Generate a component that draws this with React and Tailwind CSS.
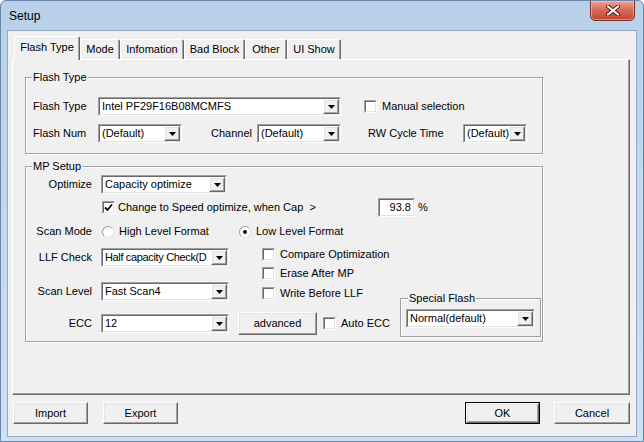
import React from "react";

const Sunken = ({ className = "", innerClass = "", children }) => (
  <div className={`border border-t-[#a0a0a0] border-l-[#a0a0a0] border-b-white border-r-white ${className}`}>
    <div className={`w-full h-full border border-t-[#696969] border-l-[#696969] border-b-[#e3e3e3] border-r-[#e3e3e3] bg-white flex items-center ${innerClass}`}>
      {children}
    </div>
  </div>
);

const Raised = ({ className = "", innerClass = "", children }) => (
  <div className={`border border-t-white border-l-white border-b-[#696969] border-r-[#696969] ${className}`}>
    <div className={`w-full h-full border border-t-[#e3e3e3] border-l-[#e3e3e3] border-b-[#a0a0a0] border-r-[#a0a0a0] bg-[#f0f0f0] flex items-center justify-center ${innerClass}`}>
      {children}
    </div>
  </div>
);

const Arrow = () => (
  <Raised className="w-[16px] h-full shrink-0">
    <svg width="7" height="4" viewBox="0 0 7 4">
      <polygon points="0,0 7,0 3.5,4" fill="#000" />
    </svg>
  </Raised>
);

const Select = ({ className, text, textClass = "" }) => (
  <Sunken className={`h-[19px] shrink-0 ${className}`}>
    <span className={`flex-1 pl-[2px] whitespace-nowrap overflow-hidden ${textClass}`}>{text}</span>
    <Arrow />
  </Sunken>
);

const Check = ({ checked, className = "" }) => (
  <Sunken className={`w-[13px] h-[13px] shrink-0 ${className}`} innerClass="justify-center">
    {checked && (
      <svg width="9" height="9" viewBox="0 0 9 9">
        <path d="M1 4.5 L3.5 7 L8 1.5" stroke="#000" strokeWidth="1.8" fill="none" />
      </svg>
    )}
  </Sunken>
);

const Radio = ({ checked, className = "" }) => (
  <div className={`w-[12px] h-[12px] rounded-full border border-t-[#a0a0a0] border-l-[#a0a0a0] border-b-[#e3e3e3] border-r-[#e3e3e3] bg-white flex items-center justify-center shrink-0 ${className}`}>
    {checked && <div className="w-[4px] h-[4px] rounded-full bg-black" />}
  </div>
);

const Group = ({ label, labelClass = "left-[6px]", className = "", children }) => (
  <div className={`relative border border-[#a0a0a0] shadow-[inset_1px_1px_0_#fff,1px_1px_0_#fff] ${className}`}>
    <span className={`absolute -top-[7px] px-[1px] bg-[#f0f0f0] leading-[13px] ${labelClass}`}>{label}</span>
    {children}
  </div>
);

const Button = ({ className = "", label, def }) =>
  def ? (
    <div className={`border border-black ${className}`}>
      <Raised className="w-full h-full">{label}</Raised>
    </div>
  ) : (
    <Raised className={className}>{label}</Raised>
  );

const Tab = ({ label, className, selected }) => (
  <div
    className={`flex items-center justify-center border-l border-t border-r border-l-white border-t-white border-r-[#696969] rounded-t-[2px] shadow-[inset_-1px_0_0_#a0a0a0] bg-[#f0f0f0] ${
      selected ? "h-[24px] -mb-px relative z-10 pb-[3px]" : "h-[20px]"
    } ${className}`}
  >
    {label}
  </div>
);

export default function App() {
  return (
    <div className="w-[644px] h-[442px] flex flex-col overflow-hidden rounded-t-[6px] border border-[#6a87ab] bg-gradient-to-b from-[#b8d0ea] via-[#c3d8ee] to-[#cfe0f2] font-['Liberation_Sans',Arial,sans-serif] text-[11px] leading-[13px] text-black">
      {/* title bar */}
      <div className="h-[29px] flex items-start shrink-0">
        <span className="ml-[8px] mt-[8px] text-[12px] leading-[14px] text-black">Setup</span>
        <div className="ml-auto mr-[8px] -mt-px w-[45px] h-[21px] rounded-b-[5px] border border-[#7d2f22] bg-gradient-to-b from-[#e8a597] via-[#d36753] to-[#c24530] shadow-[inset_0_0_0_1px_rgba(255,210,200,0.5)] flex items-center justify-center">
          <svg width="14" height="11" viewBox="0 0 14 11">
            <path d="M2 1.5 L12 9.5 M12 1.5 L2 9.5" stroke="#4a1a12" strokeWidth="4" strokeLinecap="round" />
            <path d="M2 1.5 L12 9.5 M12 1.5 L2 9.5" stroke="#fff" strokeWidth="2.2" strokeLinecap="round" />
          </svg>
        </div>
      </div>

      {/* client */}
      <div className="ml-[6px] w-[630px] h-[407px] border border-[#93a9c4] bg-[#f0f0f0] flex flex-col shrink-0">
        {/* tabs */}
        <div className="mt-[5px] h-[23px] flex items-end pl-[6px]">
          <Tab label="Flash Type" className="w-[66px]" selected />
          <Tab label="Mode" className="w-[40px]" />
          <Tab label="Infomation" className="w-[64px]" />
          <Tab label="Bad Block" className="w-[61px]" />
          <Tab label="Other" className="w-[42px]" />
          <Tab label="UI Show" className="w-[54px]" />
        </div>

        {/* panel */}
        <div className="ml-[4px] w-[618px] h-[336px] border border-l-white border-t-white border-r-[#696969] border-b-[#696969] shadow-[inset_-1px_-1px_0_#a0a0a0] flex flex-col">
          {/* Flash Type group */}
          <Group label="Flash Type" className="mt-[17px] ml-[12px] w-[518px] h-[77px]">
            <div className="mt-[19px] pl-[7px] h-[19px] flex items-center">
              <span className="w-[65px]">Flash Type</span>
              <Select className="w-[243px]" text="Intel PF29F16B08MCMFS" />
              <Check className="ml-[23px]" />
              <span className="ml-[5px]">Manual selection</span>
            </div>
            <div className="mt-[8px] pl-[7px] h-[19px] flex items-center">
              <span className="w-[65px]">Flash Num</span>
              <Select className="w-[84px]" text="(Default)" />
              <span className="ml-[29px] w-[46px]">Channel</span>
              <Select className="w-[84px]" text="(Default)" />
              <span className="ml-[27px] w-[95px]">RW Cycle Time</span>
              <Select className="w-[64px]" text="(Default)" />
            </div>
          </Group>

          {/* MP Setup group */}
          <Group label="MP Setup" className="mt-[12px] ml-[12px] w-[518px] h-[176px]">
            <div className="mt-[8px] h-[19px] flex items-center">
              <span className="w-[66px] text-right">Optimize</span>
              <Select className="ml-[9px] w-[126px]" text="Capacity optimize" />
            </div>
            <div className="mt-[4px] h-[19px] flex items-center pl-[76px]">
              <Check checked />
              <span className="ml-[3px] w-[260px]">Change to Speed optimize, when Cap &nbsp;&gt;</span>
              <Sunken className="w-[37px] h-[19px]" innerClass="justify-end">
                <span className="pr-[2px]">93.8</span>
              </Sunken>
              <span className="ml-[3px]">%</span>
            </div>
            <div className="mt-[5px] h-[19px] flex items-center">
              <span className="w-[66px] text-right">Scan Mode</span>
              <Radio className="ml-[10px]" />
              <span className="ml-[5px] w-[120px]">High Level Format</span>
              <Radio checked />
              <span className="ml-[5px]">Low Level Format</span>
            </div>

            <div className="mt-[7px] flex items-start">
              <div className="w-[374px] flex flex-col">
                {/* Sub A */}
                <div className="flex items-start h-[53px]">
                  <div className="flex flex-col w-[203px]">
                    <div className="h-[19px] flex items-center">
                      <span className="w-[66px] text-right">LLF Check</span>
                      <Select className="ml-[9px] w-[128px]" textClass="tracking-[-0.35px]" text="Half capacity Check(D" />
                    </div>
                    <div className="mt-[15px] h-[19px] flex items-center">
                      <span className="w-[66px] text-right">Scan Level</span>
                      <Select className="ml-[9px] w-[128px]" text="Fast Scan4" />
                    </div>
                  </div>
                  <div className="ml-[33px] flex flex-col">
                    <div className="h-[13px] flex items-center">
                      <Check />
                      <span className="ml-[5px]">Compare Optimization</span>
                    </div>
                    <div className="mt-[6px] h-[13px] flex items-center">
                      <Check />
                      <span className="ml-[5px]">Erase After MP</span>
                    </div>
                    <div className="mt-[7px] h-[13px] flex items-center">
                      <Check />
                      <span className="ml-[5px]">Write Before LLF</span>
                    </div>
                  </div>
                </div>
                {/* Sub B */}
                <div className="mt-[11px] h-[23px] flex items-center">
                  <span className="w-[66px] text-right">ECC</span>
                  <Select className="ml-[9px] w-[128px]" text="12" />
                  <Button className="ml-[9px] w-[79px] h-[23px]" label="advanced" />
                  <Check className="ml-[6px]" />
                  <span className="ml-[5px]">Auto ECC</span>
                </div>
              </div>
              <Group label="Special Flash" labelClass="left-[7px]" className="mt-[50px] w-[141px] h-[39px]">
                <Select className="mt-[10px] ml-[5px] w-[129px]" text="Normal(default)" />
              </Group>
            </div>
          </Group>
        </div>

        {/* bottom buttons */}
        <div className="mt-[7px] h-[22px] flex items-center">
          <Button className="ml-[5px] w-[75px] h-[22px]" label="Import" />
          <Button className="ml-[15px] w-[75px] h-[22px]" label="Export" />
          <Button className="ml-auto w-[75px] h-[22px]" label="OK" def />
          <Button className="ml-[14px] mr-[6px] w-[76px] h-[22px]" label="Cancel" />
        </div>
      </div>
    </div>
  );
}
